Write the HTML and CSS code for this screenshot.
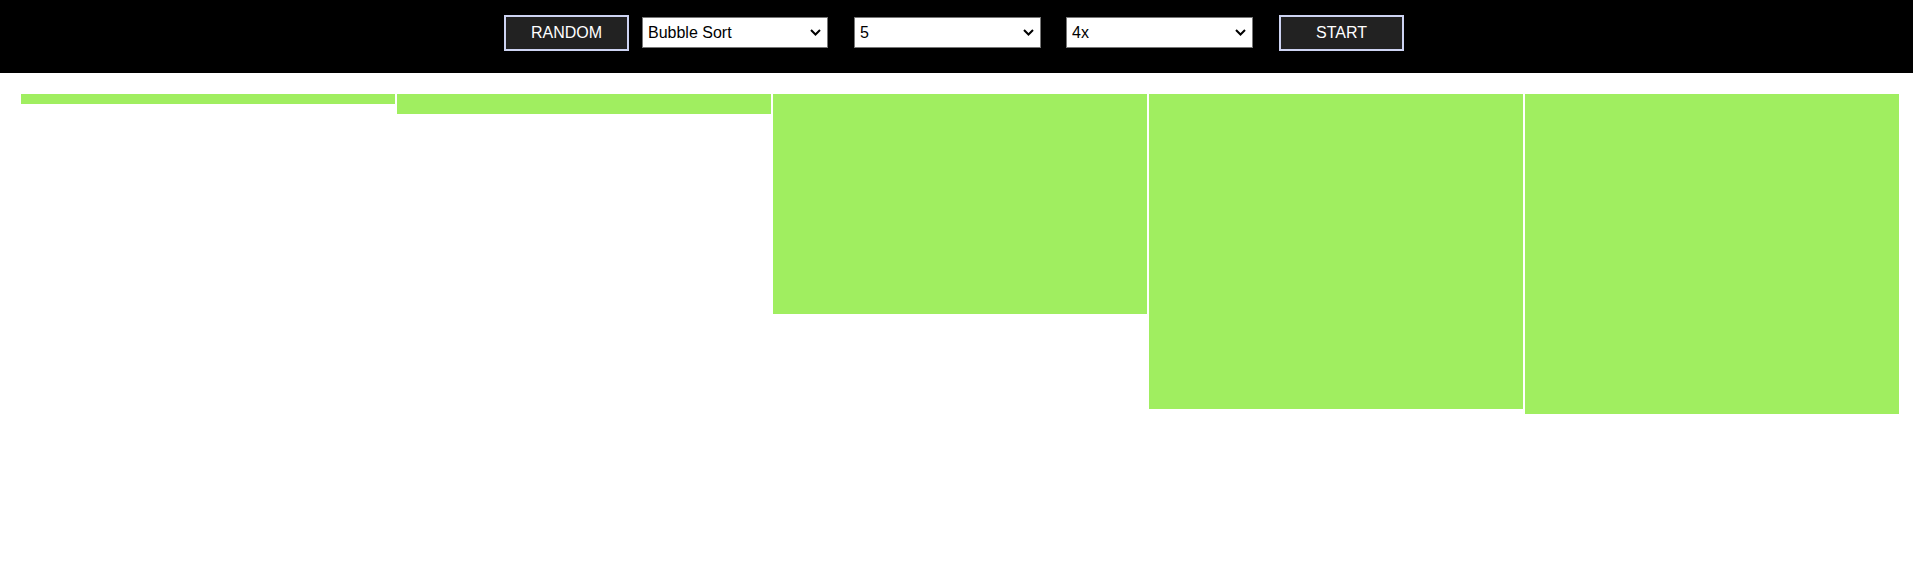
FILE: index.html
```html
<!DOCTYPE html>
<html>
<head>
<meta charset="utf-8">
<link rel="stylesheet" href="styles.css">
</head>
<body>
<header class="toolbar">
  <button class="btn">RANDOM</button>
  <select class="sel sel-algo"><option>Bubble Sort</option></select>
  <select class="sel sel-size"><option>5</option></select>
  <select class="sel sel-speed"><option>4x</option></select>
  <button class="btn btn-start">START</button>
</header>
<main class="bars">
  <div class="bar" style="height:10px"></div>
  <div class="bar" style="height:20px"></div>
  <div class="bar" style="height:220px"></div>
  <div class="bar" style="height:315px"></div>
  <div class="bar" style="height:320px"></div>
</main>
</body>
</html>
```
FILE: styles.css
```css
html, body {
  margin: 0;
  padding: 0;
  background: #ffffff;
  font-family: "Liberation Sans", Arial, sans-serif;
}
.toolbar {
  box-sizing: border-box;
  height: 73px;
  background: #000000;
  display: flex;
  justify-content: center;
  align-items: flex-start;
  padding-top: 15px;
  padding-right: 5px;
}
.btn {
  box-sizing: border-box;
  width: 125px;
  height: 36px;
  background: #222222;
  color: #ffffff;
  border: 2px solid #cdd3f2;
  font-family: "Liberation Sans", Arial, sans-serif;
  font-size: 16px;
  padding: 0;
  margin: 0;
}
.btn-start {
  margin-left: 26px;
}
.sel {
  box-sizing: border-box;
  -webkit-appearance: none;
  appearance: none;
  height: 31px;
  margin-top: 2px;
  font-family: "Liberation Sans", Arial, sans-serif;
  font-size: 16px;
  color: #000000;
  background-color: #ffffff;
  background-image: url("data:image/svg+xml;utf8,<svg xmlns='http://www.w3.org/2000/svg' width='11' height='7' viewBox='0 0 11 7'><path d='M1 1 L5.5 5.5 L10 1' fill='none' stroke='black' stroke-width='2'/></svg>");
  background-repeat: no-repeat;
  background-position: right 6px center;
  border: 1px solid #767676;
  border-radius: 0;
  padding: 0 20px 0 5px;
}
.sel-algo {
  width: 186px;
  margin-left: 13px;
}
.sel-size {
  width: 187px;
  margin-left: 26px;
}
.sel-speed {
  width: 187px;
  margin-left: 25px;
}
.bars {
  display: flex;
  align-items: flex-start;
  padding: 21px 0 0 20px;
}
.bar {
  width: 374px;
  margin: 0 1px;
  background: #a0ee60;
}
```
